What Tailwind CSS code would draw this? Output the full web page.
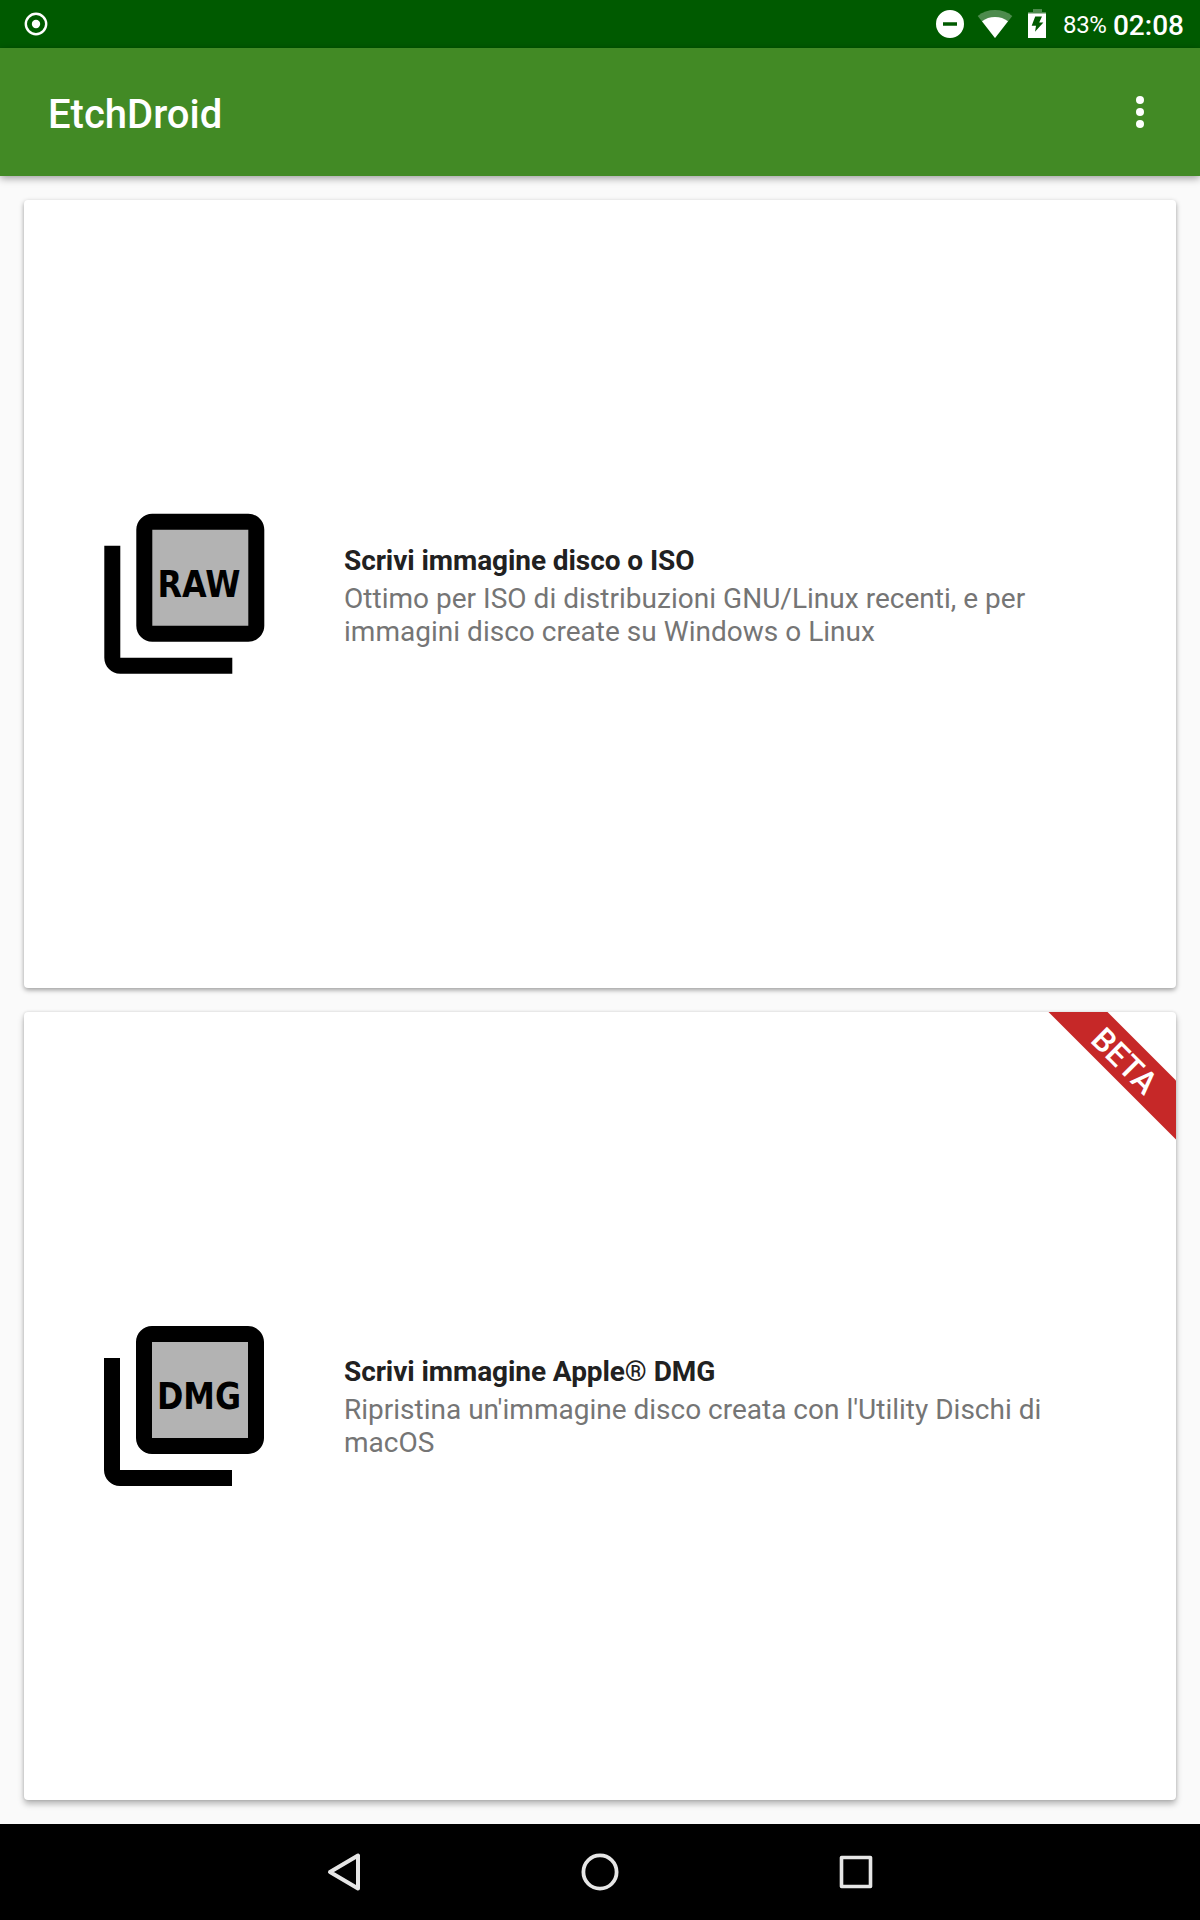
<!DOCTYPE html>
<html lang="it">
<head>
<meta charset="utf-8">
<title>EtchDroid</title>
<script src="https://cdn.jsdelivr.net/npm/@tailwindcss/browser@4"></script>
</head>
<body class="h-[1920px] w-[1200px] overflow-hidden bg-[#fafafa] font-['Roboto',sans-serif]">
<div class="flex h-full flex-col">
  <!-- Status bar -->
  <div class="flex h-12 shrink-0 items-center bg-[#005a00] pr-4 pl-6 text-white">
    <svg class="size-6" viewBox="0 0 24 24"><circle cx="12" cy="12" r="10.2" fill="none" stroke="#fff" stroke-width="2.4"/><circle cx="12" cy="12" r="4.2" fill="#fff"/></svg>
    <div class="ml-auto flex h-full items-center">
      <svg class="h-12 w-[128px]" viewBox="0 0 128 48">
        <path fill="#fff" fill-rule="evenodd" d="M32 10a14 14 0 1 0 0 28 14 14 0 0 0 0-28zM25 22.2h14v3.5H25z"/>
        <path fill="#fff" fill-opacity=".3" d="M59.700 15.900Q67 10 77 10T94.300 15.900L77 38z"/>
        <path fill="#fff" d="M64 21.300Q69.500 17 77 17T90 21.300L77 38z"/>
        <path fill="#fff" fill-opacity=".3" d="M115 9h9v3h4v3h-18v-3h5z"/>
        <path fill="#fff" fill-rule="evenodd" d="M110 13.500h18V38h-18zM117.200 16.600 113.700 25.800h4.300l-1 6 8.400-9.400h-4.200l2.800-5.800z"/>
      </svg>
      <span class="ml-[17.5px] pt-0.5 text-[24px] leading-[46px] tracking-[-0.4px]">83%</span>
      <span class="ml-[6.5px] pt-1 text-[28px] leading-[48px] font-medium">02:08</span>
    </div>
  </div>
  <!-- Toolbar -->
  <header class="relative flex h-32 shrink-0 items-center justify-between bg-[#428a25] pr-12 pl-12 text-white shadow-[0_2px_8px_rgba(0,0,0,0.4)]">
    <h1 class="pt-1.5 text-[40px] leading-[48px] font-medium">EtchDroid</h1>
    <svg class="h-8 w-6" viewBox="0 0 24 32" fill="#fff"><circle cx="12" cy="4" r="4"/><circle cx="12" cy="16" r="4"/><circle cx="12" cy="28" r="4"/></svg>
  </header>
  <!-- Image type cards -->
  <main class="flex flex-1 flex-col gap-6 p-6">
    <section class="flex flex-1 items-center rounded bg-white pl-16 shadow-[0_2px_5px_rgba(0,0,0,0.38)]">
      <svg class="size-48 shrink-0" viewBox="0 0 192 192">
        <path fill="#b3b3b3" d="M56 24h112v112H56z"/>
        <path d="M32.300 47.700H16.300v112c0 8.800 7.200 16 16 16h112v-16h-112zM160.300 15.700h-96c-8.800 0-16 7.200-16 16v96c0 8.800 7.200 16 16 16h96c8.800 0 16-7.200 16-16v-96c0-8.800-7.200-16-16-16zm0 112h-96v-96h96z"/>
        <text x="69.500" y="98.500" textLength="83" lengthAdjust="spacingAndGlyphs" class="font-['DejaVu_Sans',sans-serif] text-[37px] font-bold">RAW</text>
      </svg>
      <div class="ml-16 w-[720px] pt-1 text-[28px] leading-[33px]">
        <h2 class="mb-[5px] font-bold tracking-[-0.08px] text-[#212121]">Scrivi immagine disco o ISO</h2>
        <p class="tracking-[0.02px] text-[#757575]">Ottimo per ISO di distribuzioni GNU/Linux recenti, e per immagini disco create su Windows o Linux</p>
      </div>
    </section>
    <section class="relative flex flex-1 items-center rounded bg-white pl-16 shadow-[0_4px_6px_rgba(0,0,0,0.28),0_0_3px_rgba(0,0,0,0.15)]">
      <svg class="size-48 shrink-0" viewBox="0 0 192 192">
        <path fill="#b3b3b3" d="M56 24h112v112H56z"/>
        <path d="M32 48H16v112c0 8.800 7.200 16 16 16h112v-16H32zM160 16H64c-8.800 0-16 7.200-16 16v96c0 8.800 7.200 16 16 16h96c8.800 0 16-7.200 16-16V32c0-8.800-7.200-16-16-16zm0 112H64V32h96z"/>
        <text x="69" y="98.500" textLength="84" lengthAdjust="spacingAndGlyphs" class="font-['DejaVu_Sans',sans-serif] text-[37px] font-bold">DMG</text>
      </svg>
      <div class="ml-16 w-[720px] pt-0.5 text-[28px] leading-[33px]">
        <h2 class="mb-[5px] font-bold tracking-[-0.08px] text-[#212121]">Scrivi immagine Apple® DMG</h2>
        <p class="text-[#757575]">Ripristina un'immagine disco creata con l'Utility Dischi di macOS</p>
      </div>
      <!-- Corner ribbon -->
      <svg class="absolute top-0 right-0 size-32" viewBox="0 0 128 128">
        <path fill="#c62828" d="M.500 0H59.500L128 68.500v59z"/>
        <text transform="translate(76.500 49) rotate(45)" y="11" text-anchor="middle" fill="#fff" class="text-[32px] font-medium">BETA</text>
      </svg>
    </section>
  </main>
  <!-- Navigation bar -->
  <nav class="relative flex h-24 shrink-0 items-center justify-center gap-52 bg-black">
    <svg class="size-12" viewBox="0 0 48 48" fill="none" stroke="#e6e6e6" stroke-width="4" stroke-linejoin="round"><path d="M10 24 38 7.500v33z"/></svg>
    <svg class="size-12" viewBox="0 0 48 48" fill="none" stroke="#e6e6e6" stroke-width="3.800"><circle cx="24" cy="24" r="16.600"/></svg>
    <svg class="size-12" viewBox="0 0 48 48" fill="none" stroke="#e6e6e6" stroke-width="3.600" stroke-linejoin="round"><path d="M9.500 9.500h29v29h-29z"/></svg>
  </nav>
</div>
</body>
</html>
